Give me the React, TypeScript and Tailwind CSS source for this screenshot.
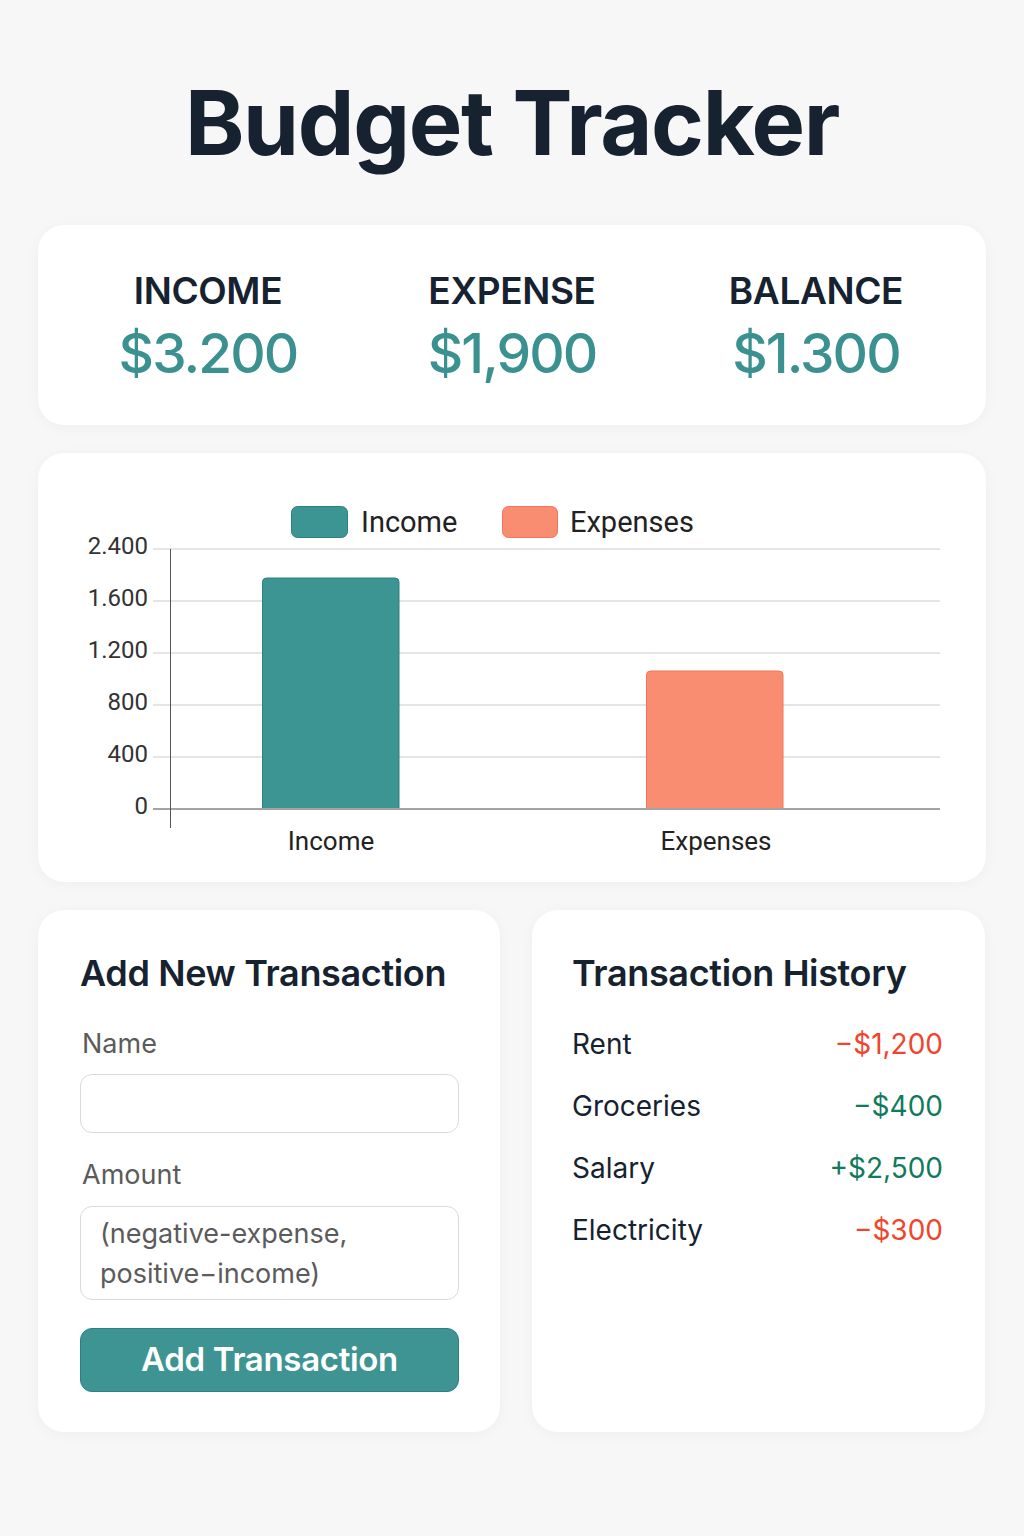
const summary = [
  { label: "INCOME", value: "$3.200" },
  { label: "EXPENSE", value: "$1,900" },
  { label: "BALANCE", value: "$1.300" },
];

const history = [
  { name: "Rent", amount: "−$1,200", color: "text-[#f0452c]" },
  { name: "Groceries", amount: "−$400", color: "text-[#127a5c]" },
  { name: "Salary", amount: "+$2,500", color: "text-[#127a5c]" },
  { name: "Electricity", amount: "−$300", color: "text-[#f0452c]" },
];

const ticks = [
  { label: "2.400", y: 96 },
  { label: "1.600", y: 148 },
  { label: "1.200", y: 200 },
  { label: "800", y: 252 },
  { label: "400", y: 304 },
];

function Chart() {
  const font = "Roboto, 'Liberation Sans', sans-serif";
  return (
    <svg width="947" height="429" viewBox="0 0 947 429" className="block">
      {/* legend */}
      <rect x="253.5" y="53.5" width="56" height="31" rx="6" fill="#3d9593" stroke="#2c817f" />
      <text x="323" y="79" fontSize="29" fill="#222" fontFamily={font}>Income</text>
      <rect x="464.5" y="53.5" width="55" height="31" rx="6" fill="#f88d72" stroke="#f37558" />
      <text x="532" y="79" fontSize="29" fill="#222" fontFamily={font}>Expenses</text>

      {/* grid */}
      {ticks.map((t) => (
        <g key={t.label}>
          <line x1="115" x2="902" y1={t.y} y2={t.y} stroke="#dcdcdc" strokeWidth="1.5" />
          <text x="110" y={t.y + 5} fontSize="24" fill="#333" textAnchor="end" fontFamily={font}>
            {t.label}
          </text>
        </g>
      ))}
      <text x="110" y="361" fontSize="24" fill="#333" textAnchor="end" fontFamily={font}>0</text>

      {/* bars */}
      <path d="M224.5 356 V129 a4 4 0 0 1 4 -4 H357 a4 4 0 0 1 4 4 V356 Z" fill="#3d9593" stroke="#2c817f" />
      <path d="M608.5 356 V222 a4 4 0 0 1 4 -4 H741 a4 4 0 0 1 4 4 V356 Z" fill="#f88d72" stroke="#f37558" />

      {/* axes */}
      <line x1="115" x2="902" y1="356" y2="356" stroke="#a3a3a3" strokeWidth="2" />
      <line x1="132.5" x2="132.5" y1="96" y2="375" stroke="#555" strokeWidth="1" />

      <text x="293" y="397" fontSize="26" fill="#222" textAnchor="middle" fontFamily={font}>Income</text>
      <text x="678" y="397" fontSize="26" fill="#222" textAnchor="middle" fontFamily={font}>Expenses</text>
    </svg>
  );
}

export default function App() {
  return (
    <div
      className="min-h-screen bg-[#f7f7f7] px-[38px] pb-[104px]"
      style={{ fontFamily: "Inter, 'Noto Sans', sans-serif" }}
    >
      <h1 className="pt-[74px] pb-[54px] text-center text-[90px] font-bold leading-[97px] tracking-[-0.015em] text-[#16222f]">
        Budget Tracker
      </h1>

      <div className="grid h-[200px] grid-cols-3 items-center rounded-[26px] bg-white px-[18px] pt-[4px] shadow-[0_2px_14px_rgba(0,0,0,0.04)]">
        {summary.map((s) => (
          <div key={s.label} className="flex flex-col items-center">
            <div className="text-[37px] font-semibold leading-[44px] tracking-[-0.01em] text-[#16222f]">
              {s.label}
            </div>
            <div className="mt-[8px] text-[55px] font-medium leading-[64px] tracking-[-0.035em] text-[#3a918f]">
              {s.value}
            </div>
          </div>
        ))}
      </div>

      <div className="mt-[28px] h-[429px] rounded-[26px] bg-white shadow-[0_2px_14px_rgba(0,0,0,0.04)]">
        <Chart />
      </div>

      <div className="mt-[28px] grid grid-cols-[462px_453px] gap-[32px]">
        <div className="flex h-[522px] flex-col rounded-[26px] bg-white pl-[42px] pr-[41px] pt-[42px] shadow-[0_2px_14px_rgba(0,0,0,0.04)]">
          <h2 className="text-[36px] font-semibold leading-[42px] tracking-[-0.01em] text-[#16222f]">
            Add New Transaction
          </h2>
          <label className="mt-[33px] pl-[2px] text-[27px] leading-[34px] text-[#5b5b5b]">Name</label>
          <div className="mt-[13px] h-[59px] rounded-[12px] border border-[#dadada] bg-white" />
          <label className="mt-[25px] pl-[2px] text-[27px] leading-[34px] text-[#5b5b5b]">Amount</label>
          <div className="mt-[14px] h-[94px] rounded-[12px] border border-[#dadada] bg-white px-[19px] pt-[7px] text-[27px] leading-[40px] text-[#5b5b5b]">
            (negative-expense,
            <br />
            positive−income)
          </div>
          <button className="mt-[28px] h-[64px] rounded-[12px] border border-[#2c817f] bg-[#3d9492] text-[33px] font-semibold tracking-[-0.01em] text-white">
            Add Transaction
          </button>
        </div>

        <div className="flex h-[522px] flex-col rounded-[26px] bg-white pl-[40px] pr-[42px] pt-[42px] shadow-[0_2px_14px_rgba(0,0,0,0.04)]">
          <h2 className="text-[36px] font-semibold leading-[42px] tracking-[-0.01em] text-[#16222f]">
            Transaction History
          </h2>
          <div className="mt-[33px] flex flex-col gap-[28px]">
            {history.map((h) => (
              <div key={h.name} className="flex items-center justify-between text-[28px] leading-[34px]">
                <span className="text-[#16222f]">{h.name}</span>
                <span className={h.color}>{h.amount}</span>
              </div>
            ))}
          </div>
        </div>
      </div>
    </div>
  );
}
